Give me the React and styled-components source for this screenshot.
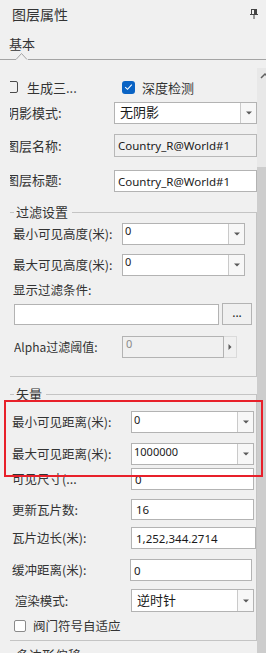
import React from 'react';
import styled, { createGlobalStyle } from 'styled-components';

const GlobalStyle = createGlobalStyle`
  html, body { margin: 0; padding: 0; background: #f0f0f0; }
  body { font-family: "Noto Sans CJK SC", sans-serif; }
`;

const CJK = `"Noto Sans CJK SC", sans-serif`;
const LATIN = `"Noto Sans", "Noto Sans CJK SC", sans-serif`;

const Panel = styled.div`
  width: 266px;
  height: 653px;
  overflow: hidden;
  background: #f0f0f0;
  display: flex;
  flex-direction: column;
  color: #333;
  font-family: ${CJK};
`;

const Header = styled.div`
  height: 28px;
  flex: none;
  display: flex;
  align-items: center;
  justify-content: space-between;
  padding: 0 8px 0 12px;
  box-sizing: border-box;
  font-size: 14px;
  color: #333;
`;

const TabBar = styled.div`
  height: 32px;
  flex: none;
  box-sizing: border-box;
  border-bottom: 1px solid #a4a4a4;
  position: relative;
  padding-left: 9px;
`;

const Tab = styled.div`
  font-size: 13px;
  line-height: 18px;
  padding-top: 7px;
  color: #333;
`;

const Notch = styled.svg`
  position: absolute;
  left: 16px;
  bottom: -1px;
`;

const Body = styled.div`
  flex: 1;
  display: flex;
  min-height: 0;
`;

const Content = styled.div`
  width: 257px;
  flex: none;
  display: flex;
  flex-direction: column;
`;

const Scrollbar = styled.div`
  width: 9px;
  flex: none;
  margin-top: 8px;
  display: flex;
  flex-direction: column;
  overflow: hidden;
`;

const Track = styled.div`
  height: 99px;
  background: #e8e8e8;
  flex: none;
  position: relative;
`;

const UpArrow = styled.svg`
  position: absolute;
  top: 4px;
  left: 3px;
`;

const Thumb = styled.div`
  flex: 1;
  background: #cdcdcd;
`;

const TopSection = styled.div`
  margin: 20px 0 0 10px;
  overflow: hidden;
  flex: none;
`;

const TopInner = styled.div`
  margin-left: -4px;
  display: flex;
  flex-direction: column;
`;

const CheckRow = styled.div`
  display: flex;
  align-items: center;
  height: 14px;
  font-size: 13px;
`;

const CheckCell = styled.div`
  width: ${(p) => p.$w}px;
  flex: none;
  display: flex;
  align-items: center;
  gap: ${(p) => p.$gap}px;
  white-space: nowrap;
`;

const PlainBox = styled.div`
  width: 12px;
  height: 12px;
  box-sizing: border-box;
  border: 1px solid #4a4a4a;
  border-radius: 2px;
  background: ${(p) => (p.$white ? '#fff' : 'transparent')};
  border-color: ${(p) => (p.$white ? '#8a8a8a' : '#4a4a4a')};
  flex: none;
`;

const BlueBox = styled.div`
  width: 13px;
  height: 13px;
  border-radius: 3px;
  background: #0a63c4;
  display: flex;
  align-items: center;
  justify-content: center;
  flex: none;
`;

const FormRow = styled.div`
  display: flex;
  align-items: center;
  margin-top: ${(p) => p.$mt || 0}px;
  margin-left: ${(p) => p.$ml || 0}px;
  gap: ${(p) => p.$gap || 0}px;
  flex: none;
`;

const Label = styled.div`
  width: ${(p) => p.$w}px;
  flex: none;
  font-size: ${(p) => p.$fs || 12.5}px;
  line-height: 16px;
  white-space: nowrap;
  overflow: hidden;
  color: #333;
  margin-top: ${(p) => p.$dy || 0}px;
`;

const BlockLabel = styled.div`
  font-size: 12.5px;
  line-height: 16px;
  margin-top: ${(p) => p.$mt}px;
  color: #333;
  white-space: nowrap;
`;

const Combo = styled.div`
  display: flex;
  width: ${(p) => p.$w}px;
  height: ${(p) => p.$h || 22}px;
  box-sizing: border-box;
  border: 1px solid #b3b3b3;
  background: ${(p) => (p.$disabled ? '#f0f0f0' : '#fff')};
  flex: none;
`;

const ComboText = styled.div`
  flex: 1;
  font-family: ${(p) => (p.$cjk ? CJK : LATIN)};
  font-size: ${(p) => p.$fs || 11}px;
  line-height: ${(p) => p.$lh || 13}px;
  padding: ${(p) => p.$pad};
  color: ${(p) => (p.$muted ? '#8a8a8a' : '#1a1a1a')};
  white-space: nowrap;
  overflow: hidden;
`;

const ComboBtn = styled.div`
  width: 15px;
  flex: none;
  border-left: 1px solid #cacaca;
  background: #f7f7f7;
  display: flex;
  align-items: center;
  justify-content: center;
`;

const SideBtn = styled.div`
  width: 13px;
  height: 22px;
  box-sizing: border-box;
  border: 1px solid #dadada;
  border-left: none;
  background: #f0f0f0;
  display: flex;
  align-items: center;
  justify-content: center;
  flex: none;
`;

const TextBox = styled.div`
  width: ${(p) => p.$w}px;
  height: ${(p) => p.$h || 22}px;
  box-sizing: border-box;
  border: 1px solid ${(p) => (p.$disabled ? '#b8b8b8' : '#b3b3b3')};
  background: ${(p) => (p.$disabled ? '#f0f0f0' : '#fff')};
  font-family: ${LATIN};
  font-size: 11.5px;
  color: #1a1a1a;
  padding-left: ${(p) => p.$pl || 3}px;
  display: flex;
  align-items: center;
  white-space: nowrap;
  overflow: hidden;
  flex: none;
`;

const DotsButton = styled.div`
  width: 30px;
  height: 22px;
  box-sizing: border-box;
  border: 1px solid #b3b3b3;
  background: #f0f0f0;
  font-family: ${LATIN};
  font-size: 12px;
  display: flex;
  align-items: center;
  justify-content: center;
  padding-bottom: 4px;
  color: #222;
  flex: none;
`;

const Group = styled.div`
  margin: ${(p) => p.$mt}px 0 0 10px;
  width: 247px;
  flex: none;
  display: flex;
  flex-direction: column;
`;

const GroupTitle = styled.div`
  display: flex;
  height: 16px;
  font-size: 13px;
  line-height: 16px;
  color: #333;
  &::before {
    content: '';
    width: 4px;
    flex: none;
    margin-top: 8px;
    border-top: 1px solid #c4c4c4;
  }
  &::after {
    content: '';
    flex: 1;
    margin-top: 8px;
    border-top: 1px solid #c4c4c4;
    border-right: 1px solid #c4c4c4;
  }
`;

const GroupTitleText = styled.span`
  padding: 0 4px 0 2px;
`;

const GroupBody = styled.div`
  border-right: 1px solid #c4c4c4;
  border-bottom: ${(p) => (p.$open ? 'none' : '1px solid #c4c4c4')};
  padding: 0 0 ${(p) => p.$pb || 0}px ${(p) => p.$pl || 0}px;
  display: flex;
  flex-direction: column;
`;

const Highlight = styled.div`
  position: relative;
  margin-top: ${(p) => p.$mt}px;
  display: flex;
  flex-direction: column;
  &::after {
    content: '';
    position: absolute;
    top: -11px;
    bottom: -12px;
    left: -8px;
    right: -7px;
    border: 2px solid #e8202a;
    pointer-events: none;
    z-index: 2;
  }
`;

const Caret = ({ dir = 'down' }) =>
  dir === 'down' ? (
    <svg width="6" height="4" viewBox="0 0 6 4">
      <path d="M0 0.5 H6 L3 3.5 Z" fill="#5a5a5a" />
    </svg>
  ) : (
    <svg width="4" height="6" viewBox="0 0 4 6">
      <path d="M0.5 0 V6 L3.5 3 Z" fill="#5a5a5a" />
    </svg>
  );

const Pin = () => (
  <svg width="8" height="10" viewBox="0 0 8 10">
    <path d="M0 5.5 H8" stroke="#444" strokeWidth="1" />
    <rect x="1.5" y="0.5" width="5" height="5" fill="none" stroke="#444" strokeWidth="1" />
    <rect x="4" y="1" width="2" height="4.5" fill="#444" />
    <path d="M4 5.5 V10" stroke="#444" strokeWidth="1" />
  </svg>
);

const Check = () => (
  <svg width="9" height="8" viewBox="0 0 9 8">
    <path d="M1.2 4.2 L3.5 6.3 L7.8 1.6" fill="none" stroke="#fff" strokeWidth="1.1" />
  </svg>
);

function DropDown({ w, h, text, pad, cjk, fs, lh }) {
  return (
    <Combo $w={w} $h={h}>
      <ComboText $pad={pad} $cjk={cjk} $fs={fs} $lh={lh}>{text}</ComboText>
      <ComboBtn>
        <Caret />
      </ComboBtn>
    </Combo>
  );
}

export default function App() {
  return (
    <>
      <GlobalStyle />
      <Panel>
        <Header>
          <span>图层属性</span>
          <Pin />
        </Header>
        <TabBar>
          <Tab>基本</Tab>
          <Notch width="12" height="8" viewBox="0 0 12 8">
            <rect x="0" y="7" width="12" height="1" fill="#f0f0f0" />
            <polyline points="0,7.5 5.5,1.5 11,7.5" fill="#f0f0f0" stroke="#a4a4a4" strokeWidth="1" />
          </Notch>
        </TabBar>
        <Body>
          <Content>
            <TopSection>
              <TopInner>
                <CheckRow>
                  <CheckCell $w={116} $gap={9}>
                    <PlainBox />
                    <span>生成三...</span>
                  </CheckCell>
                  <CheckCell $w={80} $gap={7}>
                    <BlueBox>
                      <Check />
                    </BlueBox>
                    <span>深度检测</span>
                  </CheckCell>
                </CheckRow>
                <FormRow $mt={8}>
                  <Label $w={108} $fs={13}>阴影模式:</Label>
                  <DropDown w={143} text="无阴影" pad="2px 0 0 5px" cjk fs={13} lh={14} />
                </FormRow>
                <FormRow $mt={10}>
                  <Label $w={108} $fs={13}>图层名称:</Label>
                  <TextBox $w={143} $h={23} $disabled>Country_R@World#1</TextBox>
                </FormRow>
                <FormRow $mt={13}>
                  <Label $w={108} $fs={13} $dy={-3}>图层标题:</Label>
                  <TextBox $w={143}>Country_R@World#1</TextBox>
                </FormRow>
              </TopInner>
            </TopSection>

            <Group $mt={12}>
              <GroupTitle>
                <GroupTitleText>过滤设置</GroupTitleText>
              </GroupTitle>
              <GroupBody $pl={3} $pb={18}>
                <FormRow $mt={3}>
                  <Label $w={109}>最小可见高度(米):</Label>
                  <DropDown w={123} text="0" pad="1px 0 0 2px" lh={12} />
                </FormRow>
                <FormRow $mt={9}>
                  <Label $w={109}>最大可见高度(米):</Label>
                  <DropDown w={123} text="0" pad="1px 0 0 2px" lh={12} />
                </FormRow>
                <BlockLabel $mt={6}>显示过滤条件:</BlockLabel>
                <FormRow $mt={5} $ml={1} $gap={3}>
                  <TextBox $w={205} $h={21} />
                  <DotsButton>...</DotsButton>
                </FormRow>
                <FormRow $mt={11} $ml={1}>
                  <Label $w={108} $fs={12}>Alpha过滤阈值:</Label>
                  <Combo $w={102} $disabled>
                    <ComboText $pad="1px 0 0 3px" $lh={12} $muted>0</ComboText>
                  </Combo>
                  <SideBtn>
                    <Caret dir="right" />
                  </SideBtn>
                </FormRow>
              </GroupBody>
            </Group>

            <Group $mt={9}>
              <GroupTitle>
                <GroupTitleText>矢量</GroupTitleText>
              </GroupTitle>
              <GroupBody $pl={2} $pb={6}>
                <Highlight $mt={9}>
                  <FormRow>
                    <Label $w={119}>最小可见距离(米):</Label>
                    <DropDown w={123} text="0" pad="1px 0 0 2px" lh={13} />
                  </FormRow>
                  <FormRow $mt={10}>
                    <Label $w={119}>最大可见距离(米):</Label>
                    <DropDown w={123} text="1000000" pad="1px 0 0 2px" lh={13} />
                  </FormRow>
                </Highlight>
                <FormRow $mt={3}>
                  <Label $w={119}>可见尺寸(...</Label>
                  <TextBox $w={123} $pl={3}>0</TextBox>
                </FormRow>
                <FormRow $mt={9}>
                  <Label $w={119}>更新瓦片数:</Label>
                  <TextBox $w={123} $h={21} $pl={4}>16</TextBox>
                </FormRow>
                <FormRow $mt={7}>
                  <Label $w={119}>瓦片边长(米):</Label>
                  <TextBox $w={125} $pl={4}>1,252,344.2714</TextBox>
                </FormRow>
                <FormRow $mt={10}>
                  <Label $w={118}>缓冲距离(米):</Label>
                  <TextBox $w={122} $pl={3}>0</TextBox>
                </FormRow>
                <FormRow $mt={8}>
                  <Label $w={119}>&nbsp;渲染模式:</Label>
                  <DropDown w={123} h={23} text="逆时针" pad="3px 0 0 5px" cjk fs={13} lh={14} />
                </FormRow>
                <FormRow $mt={6} $ml={2} $gap={7}>
                  <PlainBox $white />
                  <Label $w={100}>阀门符号自适应</Label>
                </FormRow>
              </GroupBody>
            </Group>

            <Group $mt={6}>
              <GroupTitle>
                <GroupTitleText>多边形偏移</GroupTitleText>
              </GroupTitle>
              <GroupBody $open />
            </Group>
          </Content>
          <Scrollbar>
            <Track>
              <UpArrow width="10" height="7" viewBox="0 0 10 7">
                <polyline points="1,6 5,2 9,6" fill="none" stroke="#606060" strokeWidth="1.5" />
              </UpArrow>
            </Track>
            <Thumb />
          </Scrollbar>
        </Body>
      </Panel>
    </>
  );
}
